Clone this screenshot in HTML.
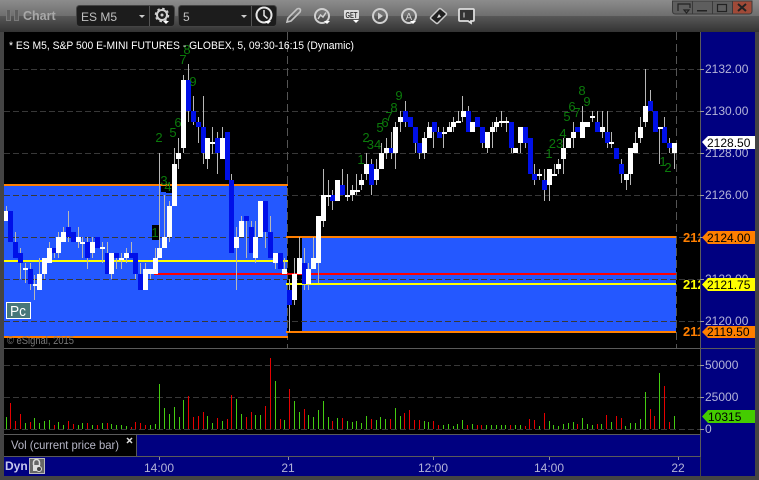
<!DOCTYPE html>
<html><head><meta charset="utf-8"><title>Chart</title>
<style>html,body{margin:0;padding:0;background:#000;width:759px;height:480px;overflow:hidden}svg{display:block}
text{font-family:"Liberation Sans",sans-serif}
.g text{fill:#0b7a0b;font-size:13px;text-anchor:middle}
.a text{fill:#b4b4d8;font-size:12px}
.t text{font-size:12px;fill:#000}
.l text{font-size:13px;font-weight:bold}
.i{fill:none;stroke:#d0d0d0;stroke-width:2}
</style></head><body>
<svg width="759" height="480" viewBox="0 0 759 480" xmlns="http://www.w3.org/2000/svg">
<defs>
<linearGradient id="tb" x1="0" y1="0" x2="0" y2="1"><stop offset="0" stop-color="#8c8c8c"/><stop offset=".5" stop-color="#6e6e6e"/><stop offset=".5" stop-color="#585858"/><stop offset="1" stop-color="#333"/></linearGradient>
<clipPath id="cl"><rect x="0" y="0" width="700" height="480"/></clipPath>
</defs>
<rect width="759" height="480" fill="#444"/>
<rect width="759" height="32" fill="url(#tb)"/>
<rect x="4" y="32" width="696" height="316" fill="#000"/>
<rect x="701" y="32" width="54" height="444" fill="#000080"/>
<rect x="4" y="349" width="696" height="85" fill="#000"/>
<rect x="4" y="435" width="132" height="21" fill="#000"/>
<rect x="137" y="435" width="563" height="21" fill="#000080"/>
<rect x="4" y="457" width="696" height="19" fill="#000080"/>
<g fill="#5a5a5a" shape-rendering="crispEdges">
<rect x="4" y="348" width="751" height="1"/><rect x="4" y="434" width="697" height="1"/><rect x="4" y="456" width="697" height="1"/><rect x="136" y="435" width="1" height="21"/><rect x="700" y="32" width="1" height="425"/>
</g>

<!-- overlays -->
<g shape-rendering="crispEdges">
<rect x="4" y="186" width="283" height="150" fill="#2458ff"/>
<rect x="302" y="238" width="374" height="93" fill="#2458ff"/>
</g>
<!-- grid -->
<path shape-rendering="crispEdges" d="M4 69.5H700M4 111.5H700M4 153.5H700M4 195.5H700M4 237.5H700M4 279.5H700M4 321.5H700M4 365.5H700M4 397.5H700M4 429.5H700" stroke="#383838" stroke-dasharray="6 3" fill="none"/>
<path shape-rendering="crispEdges" d="M287.5 32V348M676.5 32V348" stroke="#555" stroke-dasharray="8 4" fill="none"/>
<g shape-rendering="crispEdges">
<rect x="4" y="184" width="284" height="2" fill="#ff7f00"/>
<rect x="4" y="336" width="284" height="2" fill="#ff7f00"/>
<rect x="286" y="236" width="390" height="2" fill="#ff7f00"/>
<rect x="286" y="331" width="390" height="2" fill="#ff7f00"/>
<rect x="4" y="260" width="284" height="2" fill="#ffff00"/>
<rect x="286" y="283" width="390" height="2" fill="#ffff00"/>
<rect x="154" y="273" width="522" height="2" fill="#ff0000"/>
</g>
<!-- black label boxes -->
<g shape-rendering="crispEdges" fill="#000"><rect x="152" y="225" width="7" height="15"/><rect x="161" y="186" width="5" height="6"/><rect x="166" y="186" width="6" height="7"/></g>

<!-- wicks -->
<path shape-rendering="crispEdges" fill="none" stroke="#b8b8b8" d="M6.5 206V221M15.5 232V258M20.5 248V279M25.5 263V283M30.5 263V290M34.5 275V300M39.5 258V290M44.5 258V279M49.5 242V263M54.5 248V258M58.5 232V258M63.5 227V242M68.5 211V242M78.5 227V248M82.5 237V258M87.5 237V269M92.5 237V258M102.5 242V263M107.5 242V274M111.5 253V279M116.5 253V269M121.5 253V269M126.5 248V263M131.5 242V253M135.5 253V279M140.5 263V280M145.5 263V270M150.5 274V279M155.5 248V260M159.5 153V258M164.5 195V248M169.5 201V242M174.5 148V170M178.5 138V169M183.5 75V153M188.5 64V122M193.5 96V125M198.5 117V143M203.5 96V164M207.5 138V169M212.5 127V154M217.5 132V174M222.5 127V159M231.5 174V253M236.5 227V290M241.5 216V237M246.5 216V258M251.5 221V253M255.5 221V263M265.5 201V248M270.5 216V258M275.5 253V269M280.5 253V269M284.5 258V274M289.5 279V332M294.5 258V305M299.5 237V274M304.5 248V290M308.5 263V290M313.5 237V269M318.5 216V283M323.5 169V227M328.5 180V206M332.5 190V210M337.5 180V201M342.5 169V195M347.5 174V201M352.5 185V201M356.5 174V195M361.5 174V190M366.5 153V180M371.5 159V195M376.5 159V185M381.5 143V169M386.5 138V159M391.5 132V159M395.5 122V169M400.5 111V132M405.5 101V127M410.5 117V127M415.5 127V153M419.5 143V159M424.5 132V159M428.5 122V138M433.5 122V148M438.5 127V138M443.5 127V148M449.5 122V132M453.5 117V132M458.5 111V123M462.5 96V122M468.5 106V132M472.5 122V132M477.5 117V127M482.5 127V148M487.5 132V153M492.5 122V148M496.5 117V132M501.5 111V127M506.5 117V132M511.5 122V153M516.5 148V153M520.5 143V153M525.5 143V148M530.5 138V174M534.5 164V185M539.5 169V180M544.5 169V201M549.5 169V201M554.5 164V174M558.5 159V174M563.5 138V174M568.5 138V148M573.5 122V148M577.5 127V132M582.5 106V138M587.5 122V127M592.5 111V122M597.5 111V132M602.5 111V138M607.5 111V148M611.5 132V148M616.5 148V159M621.5 159V183M626.5 174V190M630.5 148V185M635.5 132V153M640.5 117V143M645.5 69V127M650.5 90V111M655.5 111V132M659.5 127V164M664.5 117V143M669.5 138V153M674.5 143V169"/>
<!-- blue bodies -->
<path shape-rendering="crispEdges" fill="#0010e8" d="M8 211h5v31h-5zM13 242h5v16h-5zM18 253h5v10h-5zM28 269h5v15h-5zM52 248h5v5h-5zM66 227h5v10h-5zM71 232h5v10h-5zM85 242h5v16h-5zM95 237h5v11h-5zM105 253h5v21h-5zM114 253h5v5h-5zM129 253h5v5h-5zM133 253h5v21h-5zM138 274h5v16h-5zM229 180h5v73h-5zM225 132h5v48h-5zM215 138h5v15h-5zM201 127h5v26h-5zM196 122h5v5h-5zM191 111h5v11h-5zM186 80h5v31h-5zM244 216h5v5h-5zM249 227h5v26h-5zM263 201h5v31h-5zM268 232h5v26h-5zM278 253h5v16h-5zM287 290h5v15h-5zM302 263h5v21h-5zM330 195h5v6h-5zM340 185h5v10h-5zM369 164h5v21h-5zM389 148h5v5h-5zM403 111h5v11h-5zM408 117h5v10h-5zM413 127h5v16h-5zM417 143h5v10h-5zM432 122h5v10h-5zM437 132h5v6h-5zM466 111h5v21h-5zM475 117h5v10h-5zM480 127h5v16h-5zM509 122h5v26h-5zM523 127h5v16h-5zM528 138h5v36h-5zM532 174h5v6h-5zM542 180h5v10h-5zM575 127h5v5h-5zM595 122h5v10h-5zM605 132h5v11h-5zM614 148h5v11h-5zM619 164h5v10h-5zM648 101h5v10h-5zM653 111h5v21h-5zM662 127h5v16h-5zM667 143h5v5h-5z"/>
<!-- white bodies -->
<path shape-rendering="crispEdges" fill="#fff" d="M4 211h4v10h-4zM23 268h5v2h-5zM33 284h5v2h-5zM37 274h5v16h-5zM42 258h5v16h-5zM47 248h5v15h-5zM56 237h5v16h-5zM61 232h5v10h-5zM76 237h5v5h-5zM80 242h5v2h-5zM90 242h5v11h-5zM100 247h5v2h-5zM109 253h5v21h-5zM119 258h5v2h-5zM124 253h5v5h-5zM143 269h5v21h-5zM148 269h5v5h-5zM153 258h5v16h-5zM157 248h5v10h-5zM162 237h5v11h-5zM167 206h5v31h-5zM172 164h5v42h-5zM176 153h5v6h-5zM181 80h5v68h-5zM205 138h5v21h-5zM210 142h5v2h-5zM220 138h5v21h-5zM234 237h5v11h-5zM239 221h5v16h-5zM253 237h5v21h-5zM258 201h5v36h-5zM273 253h5v10h-5zM282 269h5v5h-5zM292 274h5v26h-5zM297 258h5v16h-5zM306 269h5v15h-5zM311 258h5v11h-5zM316 216h5v47h-5zM321 195h5v26h-5zM326 195h5v2h-5zM335 180h5v21h-5zM345 195h5v2h-5zM350 190h5v5h-5zM355 190h5v2h-5zM359 180h5v5h-5zM364 164h5v10h-5zM374 169h5v11h-5zM379 153h5v16h-5zM384 148h5v5h-5zM393 127h5v26h-5zM398 117h5v5h-5zM422 138h5v15h-5zM427 127h5v11h-5zM442 132h5v2h-5zM447 127h5v5h-5zM451 122h5v5h-5zM456 121h5v2h-5zM461 111h5v6h-5zM470 122h5v10h-5zM485 132h5v16h-5zM490 127h5v5h-5zM494 122h5v5h-5zM499 121h5v2h-5zM504 121h5v2h-5zM513 148h5v5h-5zM518 127h5v16h-5zM537 174h5v2h-5zM547 169h5v16h-5zM552 174h5v2h-5zM556 164h5v5h-5zM561 148h5v11h-5zM566 138h5v10h-5zM571 132h5v6h-5zM580 122h5v16h-5zM585 122h5v5h-5zM590 116h5v2h-5zM600 127h5v5h-5zM609 142h5v2h-5zM624 174h5v6h-5zM628 148h5v26h-5zM633 143h5v10h-5zM638 127h5v11h-5zM643 106h5v16h-5zM658 127h5v2h-5zM672 143h5v10h-5z"/>

<!-- sequence numbers -->
<g class="g">
<text x="187" y="54">8</text><text x="183" y="64">7</text><text x="193" y="86">9</text><text x="178" y="127">6</text><text x="173" y="137">5</text><text x="159" y="142">2</text><text x="164" y="185">3</text><text x="168" y="191">4</text><text x="155" y="237">1</text>
<text x="361" y="164">1</text><text x="366" y="142">2</text><text x="374" y="149">34</text><text x="380" y="132">5</text><text x="385" y="127">6</text><text x="389" y="121">7</text><text x="394" y="112">8</text><text x="399" y="100">9</text>
<text x="549" y="158">1</text><text x="556" y="148">23</text><text x="563" y="138">4</text><text x="567" y="121">5</text><text x="572" y="111">6</text><text x="577" y="117">7</text><text x="582" y="95">8</text><text x="587" y="106">9</text><text x="663" y="166">1</text><text x="668" y="172">2</text>
</g>

<!-- Volume -->
<path shape-rendering="crispEdges" fill="none" stroke="#e60000" d="M10.5 403V429M15.5 421V429M20.5 414V429M30.5 422V429M54.5 425V429M68.5 421V429M73.5 424V429M87.5 423V429M97.5 425V429M107.5 423V429M131.5 427V429M135.5 422V429M140.5 423V429M145.5 425V429M188.5 396V429M193.5 417V429M198.5 416V429M203.5 412V429M217.5 418V429M227.5 419V429M231.5 395V429M246.5 417V429M251.5 412V429M265.5 406V429M270.5 358V429M280.5 419V429M289.5 389V429M304.5 409V429M332.5 421V429M342.5 418V429M371.5 419V429M390.5 419V429M404.5 413V429M409.5 410V429M414.5 420V429M419.5 420V429M433.5 421V429M438.5 425V429M467.5 425V429M477.5 425V429M481.5 425V429M510.5 425V429M525.5 426V429M529.5 419V429M534.5 420V429M544.5 413V429M577.5 424V429M597.5 424V429M606.5 415V429M616.5 416V429M621.5 418V429M650.5 409V429M654.5 416V429M664.5 386V429M669.5 422V429"/>
<path shape-rendering="crispEdges" fill="none" stroke="#44cc11" d="M6.5 417V429M25.5 423V429M34.5 418V429M39.5 423V429M44.5 421V429M49.5 420V429M58.5 422V429M63.5 425V429M78.5 425V429M82.5 423V429M92.5 425V429M102.5 423V429M111.5 424V429M116.5 425V429M121.5 425V429M126.5 426V429M150.5 425V429M155.5 424V429M159.5 384V429M164.5 408V429M169.5 414V429M174.5 407V429M179.5 417V429M183.5 400V429M207.5 416V429M212.5 423V429M222.5 421V429M236.5 399V429M241.5 414V429M255.5 415V429M260.5 415V429M275.5 381V429M284.5 420V429M294.5 401V429M299.5 412V429M308.5 415V429M313.5 417V429M318.5 410V429M323.5 401V429M328.5 417V429M337.5 418V429M347.5 421V429M352.5 422V429M356.5 421V429M361.5 423V429M366.5 416V429M376.5 420V429M380.5 417V429M385.5 419V429M395.5 408V429M400.5 416V429M424.5 421V429M428.5 422V429M443.5 425V429M448.5 424V429M453.5 426V429M457.5 424V429M462.5 420V429M472.5 424V429M486.5 425V429M491.5 425V429M496.5 425V429M501.5 425V429M505.5 425V429M515.5 425V429M520.5 425V429M539.5 426V429M549.5 421V429M553.5 425V429M558.5 426V429M563.5 424V429M568.5 423V429M573.5 422V429M582.5 418V429M587.5 424V429M592.5 425V429M601.5 424V429M611.5 422V429M625.5 426V429M630.5 423V429M635.5 423V429M640.5 419V429M645.5 392V429M659.5 373V429M674.5 416V429"/>

<!-- Top title -->
<text x="9" y="49" font-size="11" fill="#fff" textLength="345" lengthAdjust="spacingAndGlyphs">* ES M5, S&amp;P 500 E-MINI FUTURES - GLOBEX, 5, 09:30-16:15 (Dynamic)</text>
<text x="7" y="344" font-size="11" fill="#777" textLength="67" lengthAdjust="spacingAndGlyphs">© eSignal, 2015</text>
<rect x="6.5" y="302.5" width="24" height="16" fill="#47777a" stroke="#fff" shape-rendering="crispEdges"/>
<text x="10" y="316" font-size="15" fill="#fff" textLength="16" lengthAdjust="spacingAndGlyphs">Pc</text>

<!-- truncated labels -->
<g class="l" clip-path="url(#cl)">
<text x="683" y="242" fill="#ff7f00">2124.00</text>
<text x="683" y="289" fill="#ffff00">2121.75</text>
<text x="683" y="336" fill="#ff7f00">2119.50</text>
</g>

<!-- axis ticks -->
<path shape-rendering="crispEdges" d="M700 69.5h4M700 111.5h4M700 153.5h4M700 195.5h4M700 237.5h4M700 279.5h4M700 321.5h4M700 365.5h4M700 397.5h4M700 429.5h4" stroke="#999" fill="none"/>
<path shape-rendering="crispEdges" d="M159.5 457v3M288.5 457v3M433.5 457v3M549.5 457v3M678.5 457v3" stroke="#8a8aa8" fill="none"/>

<g class="a">
<text x="705" y="73">2132.00</text><text x="705" y="115">2130.00</text><text x="705" y="157">2128.00</text><text x="705" y="199">2126.00</text><text x="705" y="283">2122.00</text><text x="705" y="325">2120.00</text>
<text x="705" y="369">50000</text><text x="705" y="401">25000</text><text x="705" y="433">0</text>
<text x="159" y="472" text-anchor="middle">14:00</text><text x="288" y="472" text-anchor="middle">21</text><text x="433" y="472" text-anchor="middle">12:00</text><text x="549" y="472" text-anchor="middle">14:00</text><text x="678" y="472" text-anchor="middle">22</text>
</g>

<!-- price tags -->
<polygon points="702,142 708,136 755,136 755,149 708,149" fill="#fff"/>
<polygon points="702,237.500 708,231 755,231 755,244 708,244" fill="#ff7f00"/>
<polygon points="702,284.500 708,278 755,278 755,291 708,291" fill="#ffff00"/>
<polygon points="702,332 708,326 755,326 755,338 708,338" fill="#ff7f00"/>
<polygon points="702,416.500 708,410 755,410 755,423 708,423" fill="#44cc00"/>
<g class="t">
<text x="707" y="147">2128.50</text><text x="707" y="242">2124.00</text><text x="707" y="289">2121.75</text><text x="707" y="336">2119.50</text><text x="708" y="421">10315</text>
</g>

<!-- Vol label / bottom -->
<text x="11" y="449" font-size="12" fill="#b8b8c8" textLength="108" lengthAdjust="spacingAndGlyphs">Vol (current price bar)</text>
<path d="M127 438l5 5M132 438l-5 5" stroke="#ddd" stroke-width="1.500" fill="none"/>
<text x="5" y="470" font-size="12" font-weight="bold" fill="#c8c8ec">Dyn</text>
<rect x="29.500" y="458.500" width="15" height="15" fill="#666" stroke="#bbb"/>
<path d="M33.500 465v-2.500a3 3 0 0 1 6 0V465" stroke="#ddd" stroke-width="1.500" fill="none"/>
<rect x="33" y="465" width="7" height="6" fill="#ddd"/><circle cx="39" cy="469" r="2.500" fill="#444" stroke="#ddd"/>

<!-- Toolbar -->
<rect x="6.500" y="9.500" width="4" height="11" fill="#5e5e5e" stroke="#7a7a7a"/>
<rect x="14.500" y="9.500" width="4" height="11" fill="#5e5e5e" stroke="#7a7a7a"/>
<text x="23" y="20" font-size="12.500" font-weight="bold" fill="#a8a8a8">Chart</text>

<rect x="76.500" y="5.500" width="98" height="21" rx="3" fill="#1c1c1c" stroke="#444"/>
<path d="M149.500 6v20" stroke="#555"/>
<text x="81" y="21" font-size="12" fill="#c0c0c0">ES M5</text>
<path d="M139 15h6l-3 3z" fill="#ccc"/>
<circle cx="162" cy="15" r="5" class="i"/><circle cx="162" cy="15" r="6.500" fill="none" stroke="#d0d0d0" stroke-width="1.500" stroke-dasharray="2.500 2.600"/><circle cx="162" cy="15" r="1.500" fill="#d0d0d0"/>
<path d="M163 21h6l-3 3z" fill="#fff"/>

<rect x="178.500" y="5.500" width="98" height="21" rx="3" fill="#1c1c1c" stroke="#444"/>
<path d="M251.500 6v20" stroke="#555"/>
<text x="183" y="21" font-size="12" fill="#c0c0c0">5</text>
<path d="M241 15h6l-3 3z" fill="#ccc"/>
<circle cx="264" cy="15" r="7.500" fill="none" stroke="#e6e6e6" stroke-width="2"/><path d="M264 10v5.500l3.500 3" fill="none" stroke="#e6e6e6" stroke-width="1.500"/>
<path d="M265 21h6l-3 3z" fill="#fff"/>

<path d="M287 22l1-4 9-9q2-1 3 0t0 3l-9 9z" fill="none" stroke="#c4c4c4" stroke-width="1.600"/>
<circle cx="322" cy="16" r="7" class="i"/><path d="M318 19l2.500-4 2.500 2 3-4.500" fill="none" stroke="#d0d0d0" stroke-width="1.500"/><path d="M324 21h6l-3 3z" fill="#fff"/>
<rect x="344" y="10" width="15" height="9" rx="1" fill="#ddd"/><text x="345.500" y="18" font-size="8" font-weight="bold" fill="#333" textLength="12" lengthAdjust="spacingAndGlyphs">GET</text><path d="M353 20h6l-3 3z" fill="#fff"/>
<circle cx="380" cy="16" r="7" class="i"/><path d="M378 12.500v7l5-3.500z" fill="#d0d0d0"/>
<circle cx="409" cy="16" r="7" class="i"/><text x="405.500" y="20" font-size="10" fill="#d0d0d0">A</text><path d="M410 21h6l-3 3z" fill="#fff"/>
<path d="M431 17l8-8q1-1 2 0l5 4q1 1 0 2l-8 8q-1 1-2 0l-5-4q-1-1 0-2z" fill="#222" stroke="#ccc" stroke-width="1.500"/><path d="M437 18l2-4 2 3z" fill="#ddd"/>
<path d="M460 9h13q1 0 1 1v10q0 1-1 1h-2v2l-3-2h-8q-1 0-1-1V10q0-1 1-1z" fill="#333" stroke="#ddd" stroke-width="1.800"/><path d="M464 12.500v5" stroke="#ddd"/>

<!-- window controls -->
<path d="M672.500 1v10q0 3 3 3H749q3 0 3-3V1z" fill="#5e5e5e" stroke="#3a3a3a"/>
<path d="M732 1.500h19.500V11q0 2.500-2.500 2.500H732z" fill="#a04a38"/>
<path d="M692.500 1v13M712.500 1v13M732.500 1v13" stroke="#3a3a3a"/>
<path d="M678 11V4h12v4M684 10h5l-2.500 3z" fill="none" stroke="#222" stroke-width="1.200"/><path d="M697 10h10v1.500h-10z" fill="#222"/>
<rect x="717.500" y="4.500" width="9" height="7" fill="none" stroke="#222" stroke-width="1.200"/>
<path d="M738 4l8 7M746 4l-8 7" stroke="#222" stroke-width="2"/>
</svg>
</body></html>
